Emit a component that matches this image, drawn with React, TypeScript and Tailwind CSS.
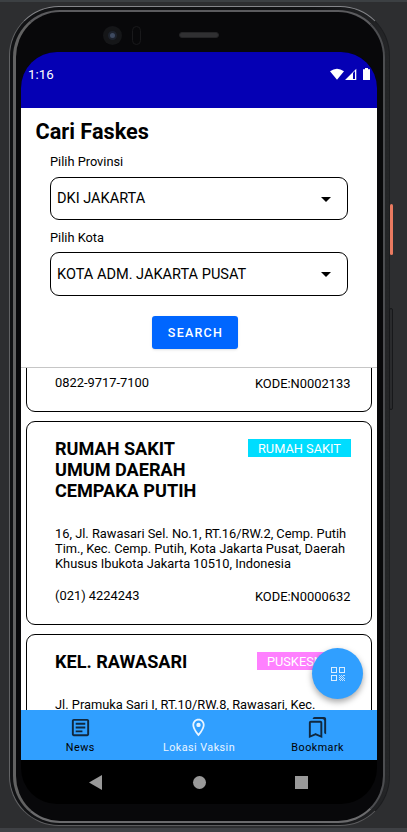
import React from "react";
import { MdArrowDropDown, MdOutlineArticle, MdOutlineBookmarks, MdOutlineLocationOn } from "react-icons/md";

function Select({ label, value, className }: { label: string; value: string; className: string }) {
  return (
    <div>
      <div className="h-4 text-[12.8px] leading-[17px]">{label}</div>
      <div className={"flex items-center justify-between rounded-[9px] border border-black pl-[6px] pr-[9px] text-[14.55px] " + className}>
        <span className="pt-px whitespace-nowrap">{value}</span>
        <MdArrowDropDown className="size-6" />
      </div>
    </div>
  );
}

type CardProps = {
  name?: string[];
  type?: string;
  badge?: string;
  address?: string[];
  phone?: string;
  code?: string;
};

function Card({ name = [], type, badge = "", address = [], phone, code }: CardProps) {
  return (
    <article className="rounded-[9px] border border-black pl-7 pr-[20.5px] pt-4 pb-5">
      <div className="flex items-start justify-between">
        <h2 className="text-[18.1px] leading-[21px] font-bold">
          {name.map((line) => (
            <div key={line} className="whitespace-nowrap">{line}</div>
          ))}
        </h2>
        {type && <span className={"mt-px h-[18px] px-[9.5px] text-[12.8px] leading-[19px] whitespace-nowrap text-white " + badge}>{type}</span>}
      </div>
      <div className="mt-[25px] text-[12.85px] leading-[15px]">
        {address.map((line) => (
          <div key={line} className="whitespace-nowrap">{line}</div>
        ))}
      </div>
      {phone && (
        <div className="mt-[17px] flex justify-between text-[12.9px] leading-4">
          <span>{phone}</span>
          <span className="relative top-px">{code}</span>
        </div>
      )}
    </article>
  );
}

function QrIcon() {
  return (
    <svg className="h-[14px] w-[14px]" viewBox="0 0 14 14" shapeRendering="crispEdges">
      <g fill="none" stroke="#d9edff">
        <path d="M0.5 0.5H5.5V5.5H0.5ZM8.5 0.5H13.5V5.5H8.5ZM0.5 8.5H5.5V13.5H0.5Z" />
      </g>
      <path fill="#c4e2ff" d="M8 8h1v1h-1zM10 8h1v1h-1zM12 8h2v1h-2zM9 9h1v1h-1zM11 9h1v1h-1zM8 10h1v1h-1zM10 10h1v1h-1zM12 10h1v1h-1zM9 11h1v1h-1zM11 11h1v1h-1zM13 11h1v1h-1zM8 12h1v1h-1zM10 12h1v1h-1zM12 12h1v1h-1zM9 13h1v1h-1zM11 13h1v1h-1zM13 13h1v1h-1z" />
    </svg>
  );
}

export default function App() {
  return (
    <div className="relative h-[832px] w-[407px] overflow-hidden border-t-2 border-b-4 border-t-[#3c4043] border-b-[#3f4145] bg-[#2d2e30] font-[Roboto,sans-serif] text-black">
      <div className="absolute top-[202px] left-[390px] h-[51px] w-[3px] rounded-sm bg-[#e97a60]" />
      <div className="absolute top-[306px] left-[389px] h-[102px] w-1 rounded-sm border border-[#17181a] bg-[#2a2b2d]" />
      <div className="mt-[4px] ml-[9px] h-[820px] w-[381px] rounded-[50px] border border-t-[#85868a] border-r-[#1c1d1f] border-b-[#5c5c5e] border-l-[#626365] bg-linear-to-r from-[#111214] from-80% to-[#252628] pt-[3px] pr-[4px] pb-[2px] pl-[3px]">
        <div className="h-full w-full rounded-[47px] border-2 border-l-3 border-t-[#5b5b5e] border-r-[#4c4d50] border-b-[#6b6b6d] border-l-[#626262] bg-[#08080a] pt-[40px] pl-[5px]">
          <div className="flex h-[752px] w-[356px] flex-col overflow-hidden rounded-[36px] bg-black">
            <div className="flex h-14 shrink-0 justify-between bg-[#0500b4] pt-[15px] pr-[6px] pl-[7px] text-white">
              <span className="text-[13.3px] leading-4">1:16</span>
              <svg className="h-4 w-[42px]" viewBox="0 0 42 16" fill="currentColor">
                <path d="M1 4.3Q8 -0.7 15 4.3L8 12.7Z" />
                <path fillRule="evenodd" d="M16 13L27.3 1.7V13ZM24 6V12H26V4Z" />
                <path d="M34 2.2H36V1H39V2.2H41V13H34Z" />
              </svg>
            </div>
            <section className="flex h-[260px] shrink-0 flex-col border-b border-[#c6c6c6] bg-white px-[29px] pt-[11px]">
              <h1 className="-ml-[14.5px] h-[34px] text-[21.7px] leading-[25px] font-bold">Cari Faskes</h1>
              <Select label="Pilih Provinsi" value="DKI JAKARTA" className="mt-2 h-[43px] w-[298px]" />
              <div className="mt-[9px]">
                <Select label="Pilih Kota" value="KOTA ADM. JAKARTA PUSAT" className="mt-[7px] h-11 w-[298px]" />
              </div>
              <button className="mt-5 ml-[102px] h-[33px] w-[86px] rounded-[3px] bg-[#0066ff] pt-px pl-px text-[12.5px] font-medium tracking-[1.25px] text-white shadow-sm">SEARCH</button>
            </section>
            <div className="relative h-[342px] shrink-0 overflow-hidden bg-white px-[5px]">
              <div className="-mt-[35px] flex flex-col gap-[9px]">
                <Card phone="0822-9717-7100" code="KODE:N0002133" />
                <Card name={["RUMAH SAKIT", "UMUM DAERAH", "CEMPAKA PUTIH"]} type="RUMAH SAKIT" badge="bg-[#00ddff]" address={["16, Jl. Rawasari Sel. No.1, RT.16/RW.2, Cemp. Putih", "Tim., Kec. Cemp. Putih, Kota Jakarta Pusat, Daerah", "Khusus Ibukota Jakarta 10510, Indonesia"]} phone="(021) 4224243" code="KODE:N0000632" />
                <Card name={["KEL. RAWASARI"]} type="PUSKESMAS" badge="bg-[#ff80ff]" address={["Jl. Pramuka Sari I, RT.10/RW.8, Rawasari, Kec."]} />
              </div>
              <button className="absolute top-[280px] left-[291px] flex size-[51px] items-center justify-center rounded-full bg-[#309fff] shadow-[0_3px_6px_rgba(0,0,0,0.35)]">
                <QrIcon />
              </button>
            </div>
            <nav className="grid h-[50px] shrink-0 grid-cols-3 bg-[#309fff] pt-[6px] text-[10.8px] leading-[14px] tracking-[0.45px]">
              <div className="flex flex-col items-center gap-[2px]">
                <MdOutlineArticle className="size-[23px] text-[#10283f]" />
                <span>News</span>
              </div>
              <div className="flex flex-col items-center gap-[2px] text-[#eaf5ff]">
                <MdOutlineLocationOn className="my-px size-[21px]" />
                <span>Lokasi Vaksin</span>
              </div>
              <div className="flex flex-col items-center gap-[2px]">
                <MdOutlineBookmarks className="size-[23px] text-[#10283f]" />
                <span>Bookmark</span>
              </div>
            </nav>
            <div className="flex grow items-center pl-[68px] text-[#999]">
              <svg className="h-[15px] w-[13px]" viewBox="0 0 13 15" fill="currentColor"><path d="M0 7.5L13 0V15Z" /></svg>
              <span className="ml-[90.5px] size-[13px] rounded-full bg-[#999]" />
              <span className="ml-[89.5px] size-[13px] bg-[#999]" />
            </div>
          </div>
        </div>
      </div>
      <div className="absolute top-6 left-[103px] flex size-[19px] items-center justify-center rounded-full bg-[#151618]">
        <span className="size-[9px] rounded-full border-2 border-[#1d222c] bg-[#3e4a60]" />
      </div>
      <div className="absolute top-6 left-[132px] h-[19px] w-[9px] rounded-full border border-[#19191b]" />
      <div className="absolute top-[30px] left-[179px] h-[6px] w-10 rounded-full border border-[#242426] bg-[#303032]" />
    </div>
  );
}
